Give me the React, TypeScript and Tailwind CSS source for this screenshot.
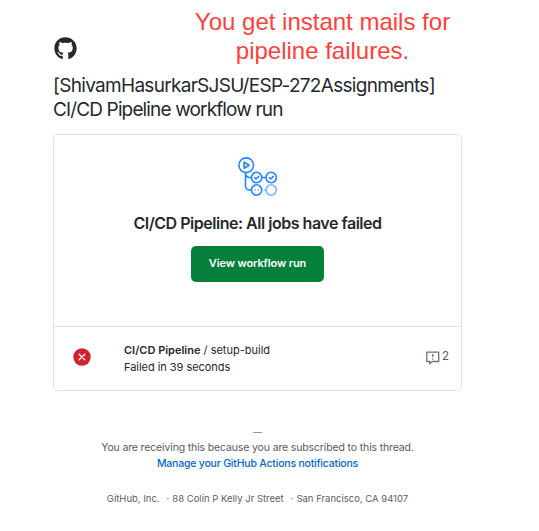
import { FaGithub } from "react-icons/fa";

function ActionsIcon() {
  return (
    <svg width="40" height="40" viewBox="0 0 40 40" fill="none" stroke="#2088ff" strokeWidth="1.6" strokeLinecap="round" strokeLinejoin="round">
      <circle cx="8.2" cy="8.2" r="7.3" />
      <path d="M6.1 5.2v6l5-3z" />
      <path d="M7.5 15.6V29c0 2 1.5 4 4 4h2M7.5 15.6c0 3 1.5 4.900 4 4.900h2M23.700 20.500h4.200" />
      <circle cx="18.600" cy="20.500" r="5.200" />
      <circle cx="33.200" cy="20.500" r="5.200" />
      <path d="m16.700 20.700 1.400 1.300 2.600-2.600M31.300 20.700l1.400 1.300 2.600-2.600" />
      <circle cx="18.600" cy="33" r="5.200" />
      <path d="M17.100 33h.01M20.100 33h.01" strokeWidth="1.3" />
      <g stroke="#79b8ff">
        <circle cx="33.200" cy="33" r="5.200" />
        <path d="M26.600 33h.8" />
      </g>
    </svg>
  );
}

function FailedIcon() {
  return (
    <svg width="18" height="18" viewBox="0 0 18 18">
      <circle cx="9" cy="9" r="8.700" fill="#cf222e" />
      <path d="m6.200 6.200 5.600 5.600m0-5.600-5.600 5.600" stroke="#fff" strokeWidth="1.300" strokeLinecap="round" />
    </svg>
  );
}

function AnnotationIcon() {
  return (
    <svg width="14" height="14" viewBox="0 0 14 14" fill="none" stroke="#6a737d" strokeWidth="1.300">
      <path d="M.8 1.200h11.900v9.300H6.200l-2.500 2.200v-2.200H.8z" strokeLinejoin="round" />
      <path d="M6.750 3v3.300M6.750 7.500v1.200" />
    </svg>
  );
}

export default function App() {
  return (
    <div className="h-[531px] w-[539px] overflow-hidden bg-white pl-[53px] font-['Inter','Liberation_Sans',sans-serif] text-[#24292e]">
      <header className="flex h-[74px] w-[409px] items-start whitespace-nowrap">
        <FaGithub className="mt-[37px] ml-px size-[23px] shrink-0" />
        <p className="mt-[7px] ml-[65px] w-[361px] shrink-0 text-center font-['Liberation_Sans',Arial,sans-serif] text-[24px] leading-[29px] text-[#ff3f3c]">
          You get instant mails for
          <br />
          pipeline failures.
        </p>
      </header>

      <h1 className="h-[60px] text-[19px] leading-6 whitespace-nowrap">
        <span className="tracking-[-0.7px]">[ShivamHasurkarSJSU/ESP-272Assignments]</span>
        <br />
        <span className="tracking-[-0.86px]">CI/CD Pipeline workflow run</span>
      </h1>

      <main className="h-[257px] w-[409px] rounded-[5px] border border-[#dfe1e7]">
        <section className="flex h-[192px] flex-col items-center border-b border-[#dfe1e7] pt-[22px]">
          <ActionsIcon />
          <h2 className="mt-[14px] text-[16px] leading-6 font-semibold tracking-[-0.48px] whitespace-nowrap">
            CI/CD Pipeline: All jobs have failed
          </h2>
          <button className="mt-[11px] h-9 w-[133px] rounded-[5px] bg-[#04803a] pb-[2px] text-[11px] font-semibold tracking-[-0.11px] whitespace-nowrap text-white">
            View workflow run
          </button>
        </section>
        <section className="flex h-[61px] items-center pl-[19px]">
          <div className="pb-[2px]">
            <FailedIcon />
          </div>
          <div className="ml-[33px] flex-1 pt-[2px] text-[11px] leading-[17px] whitespace-nowrap">
            <p><strong className="font-semibold">CI/CD Pipeline</strong> / setup-build</p>
            <p className="tracking-[-0.04px]">Failed in 39 seconds</p>
          </div>
          <div className="mr-3 flex items-center gap-[2px] text-[11.5px] leading-4 text-[#586069]">
            <AnnotationIcon />
            <span className="-mt-[3px]">2</span>
          </div>
        </section>
      </main>

      <footer className="w-[409px] pt-[33px] text-center text-[10.5px] leading-4 whitespace-nowrap">
        <p className="flex h-4 justify-center text-[#999]">
          <span className="text-[9px] leading-[15px] font-bold">—</span>
        </p>
        <p className="tracking-[-0.14px] text-[#5a5a5a]">You are receiving this because you are subscribed to this thread.</p>
        <p className="font-medium tracking-[-0.2px] text-[#0366d6]">Manage your GitHub Actions notifications</p>
        <p className="mt-[19px] text-[9.5px] text-[#586069]">
          GitHub, Inc.<span className="mr-[3px] ml-[7px]">·</span>88 Colin P Kelly Jr Street<span className="mr-[3px] ml-[7px]">·</span>San Francisco, CA 94107
        </p>
      </footer>
    </div>
  );
}
